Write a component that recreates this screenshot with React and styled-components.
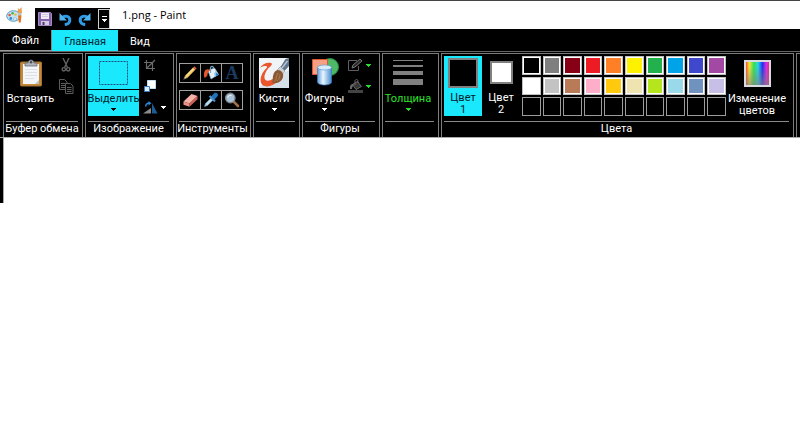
import React from 'react'
import { useState } from 'react';
import styled, { createGlobalStyle } from 'styled-components';

const topColors = ['#000000', '#7f7f7f', '#880015', '#ed1c24', '#ff7f27', '#fff200', '#22b14c', '#00a2e8', '#3f48cc', '#a349a4'];
const bottomColors = ['#ffffff', '#c3c3c3', '#b97a57', '#ffaec9', '#ffc90e', '#efe4b0', '#b5e61d', '#99d9ea', '#7092be', '#c8bfe7'];
const tabs = ['Файл', 'Главная', 'Вид'];

const App = () => {
  const [tab, setTab] = useState('Главная');
  const [slot, setSlot] = useState(1);

  return (
    <>
      <GlobalStyle />
      <TitleBar>
        <PaintLogo />
        <QuickBar>
          <QuickButton aria-label='Сохранить'><SaveIcon /></QuickButton>
          <QuickButton aria-label='Отменить'><UndoIcon /></QuickButton>
          <QuickButton aria-label='Вернуть'><UndoIcon flipped /></QuickButton>
          <QuickMenu aria-label='Настройка панели'>
            <svg width='7' height='10' viewBox='0 0 7 10' shapeRendering='crispEdges'>
              <path d='M1 2h5v1H1zM1 5h5v1H5v1H4v1H3V7H2V6H1z' fill='#fff' />
            </svg>
          </QuickMenu>
        </QuickBar>
        <WindowTitle>1.png - Paint</WindowTitle>
      </TitleBar>

      <TabBar>
        {tabs.map((name, i) => {
          return <Tab key={name} $active={name === tab} $file={i === 0} onClick={() => setTab(name)}>{name}</Tab>
        })}
      </TabBar>

      <Ribbon>
        <Group $width={80}>
          <GroupBody>
            <BigButton $width={49}>
              <BigIcon><ClipboardIcon /></BigIcon>
              <span>Вставить</span>
              <Arrow />
            </BigButton>
            <SmallColumn>
              <SmallButton aria-label='Вырезать'><ScissorsIcon /></SmallButton>
              <SmallButton aria-label='Копировать'><CopyIcon /></SmallButton>
            </SmallColumn>
          </GroupBody>
          <GroupLabel>Буфер обмена</GroupLabel>
        </Group>

        <Group $width={89}>
          <GroupBody>
            <SelectButton>
              <SelectArea>
                <svg width='29' height='24' viewBox='0 0 29 24'>
                  <rect x='.5' y='.5' width='28' height='23' fill='none' stroke='#174b80' strokeDasharray='2 1' />
                </svg>
              </SelectArea>
              <span>Выделить</span>
              <Arrow color='#000' />
            </SelectButton>
            <SmallColumn>
              <SmallButton aria-label='Обрезать'><CropIcon /></SmallButton>
              <SmallButton aria-label='Изменить размер'><ResizeIcon /></SmallButton>
              <SmallButton aria-label='Повернуть'><RotateIcon /><Arrow /></SmallButton>
            </SmallColumn>
          </GroupBody>
          <GroupLabel>Изображение</GroupLabel>
        </Group>

        <Group $width={75}>
          <GroupBody>
            <ToolGrid>
              <Tool aria-label='Карандаш'><PencilIcon /></Tool>
              <Tool aria-label='Заливка'><BucketIcon /></Tool>
              <Tool aria-label='Текст'><Letter>A</Letter></Tool>
              <Tool aria-label='Ластик'><EraserIcon /></Tool>
              <Tool aria-label='Палитра'><DropperIcon /></Tool>
              <Tool aria-label='Масштаб'><LensIcon /></Tool>
            </ToolGrid>
          </GroupBody>
          <GroupLabel>Инструменты</GroupLabel>
        </Group>

        <Group $width={47}>
          <GroupBody>
            <BigButton $width={36}>
              <BigIcon><BrushIcon /></BigIcon>
              <span>Кисти</span>
              <Arrow />
            </BigButton>
          </GroupBody>
          <GroupLabel />
        </Group>

        <Group $width={78}>
          <GroupBody>
            <BigButton $width={39}>
              <BigIcon><ShapesIcon /></BigIcon>
              <span>Фигуры</span>
              <Arrow />
            </BigButton>
            <SmallColumn>
              <SmallButton aria-label='Контур'><OutlineIcon /><Arrow color='#2be02b' /></SmallButton>
              <SmallButton aria-label='Заливка фигуры'><FillIcon /><Arrow color='#2be02b' /></SmallButton>
            </SmallColumn>
          </GroupBody>
          <GroupLabel>Фигуры</GroupLabel>
        </Group>

        <Group $width={57}>
          <GroupBody>
            <BigButton $width={46} $color='#2be02b'>
              <BigIcon><WidthIcon /></BigIcon>
              <span>Толщина</span>
              <Arrow color='#2be02b' />
            </BigButton>
          </GroupBody>
          <GroupLabel />
        </Group>

        <Group $width={353}>
          <GroupBody>
            <ColorSlot $active={slot === 1} onClick={() => setSlot(1)}>
              <SlotBox><SlotColor $size={30} $color='#000' /></SlotBox>
              <span>Цвет<br />1</span>
            </ColorSlot>
            <ColorSlot $active={slot === 2} onClick={() => setSlot(2)}>
              <SlotBox><SlotColor $size={23} $color='#fff' /></SlotBox>
              <span>Цвет<br />2</span>
            </ColorSlot>
            <Palette>
              {[...topColors, ...bottomColors].map((c) => {
                return <Swatch key={c} $color={c} aria-label={c} />
              })}
              {topColors.map((c, i) => {
                return <EmptySwatch key={`empty${i}`} aria-label={`Пусто ${i + 1}`} />
              })}
            </Palette>
            <BigButton $width={62}>
              <BigIcon><SpectrumIcon /></BigIcon>
              <span>Изменение<br />цветов</span>
            </BigButton>
          </GroupBody>
          <GroupLabel>Цвета</GroupLabel>
        </Group>

        <LastGroup />
      </Ribbon>

      <Workspace>
        <Ruler />
      </Workspace>
    </>
  )
}

export default App

const Arrow = ({ color = '#fff' }) => (
  <svg width='5' height='3' viewBox='0 0 5 3' shapeRendering='crispEdges'>
    <path d='M0 0h5v1H4v1H3v1H2V2H1V1H0z' fill={color} />
  </svg>
)

const PaintLogo = () => (
  <svg width='17' height='17' viewBox='0 0 17 17'>
    <ellipse cx='7.5' cy='9' rx='6.8' ry='5.3' fill='#c5e2f1' stroke='#5f9fc4' />
    <ellipse cx='9' cy='12' rx='1.8' ry='1.2' fill='#fff' stroke='#5f9fc4' strokeWidth='.6' />
    <circle cx='3.6' cy='8' r='1.3' fill='#e0563b' />
    <circle cx='6.6' cy='6.2' r='1.3' fill='#4cae4c' />
    <circle cx='4.8' cy='11.4' r='1.3' fill='#2f7fd0' />
    <circle cx='9.4' cy='7.6' r='1.2' fill='#e8b92c' />
    <path d='M11.500 6l.5-5 1.5 1.500L15.500 0l.5 6z' fill='#e9a14e' />
    <path d='M12 6h3.500v2.500H12z' fill='#b9c3ca' />
    <path d='M12 8.500h3.500l-.8 7h-1.900z' fill='#e5701d' />
  </svg>
)

const SaveIcon = () => (
  <svg width='14' height='14' viewBox='0 0 14 14'>
    <path d='M.5.5h12l1 1v12H.5z' fill='#8264ad' stroke='#a58ac4' />
    <path d='M3 1h8v6H3z' fill='#eee9f5' />
    <path d='M4 2.500h6M4 4.500h6' stroke='#d3cae0' />
    <path d='M3 9h8v4H3z' fill='#d5cbe2' />
    <path d='M4.500 10h2v3h-2z' fill='#4c3670' />
  </svg>
)

const UndoIcon = ({ flipped }) => (
  <svg width='14' height='14' viewBox='0 0 14 14'>
    <g transform={flipped ? 'matrix(-1 0 0 1 14 0)' : undefined}>
      <path d='M4 5.500C7 3 11.800 4.200 11.800 8c0 2.800-2 4.300-5 4.600' fill='none' stroke='#2f9be6' strokeWidth='3' />
      <path d='M1.500 1v7.500H9L6.500 6 4 3.500z' fill='#4db4f2' />
    </g>
  </svg>
)

const ClipboardIcon = () => (
  <svg width='24' height='28' viewBox='0 0 24 28'>
    <rect x='1.500' y='3' width='21' height='24' rx='1' fill='#c38a3c' stroke='#a5712d' />
    <path d='M4 5h16v20H4z' fill='#f3f5f8' />
    <path d='M16 25l4-4v4z' fill='#b8c0c8' />
    <path d='M6 10.500h12M6 13.500h12M6 16.500h12M6 19.500h9' stroke='#dce1e7' />
    <path d='M6 7V4h3c0-4 6-4 6 0h3v3z' fill='#aeb4bb' stroke='#646a71' strokeWidth='.8' />
    <circle cx='12' cy='3.200' r='1.200' fill='#474c52' />
  </svg>
)

const ScissorsIcon = () => (
  <svg width='14' height='14' viewBox='0 0 14 14' fill='none' stroke='#626262' strokeWidth='1.400'>
    <path d='M4 0l4.500 9.500M10 0L5.500 9.500' />
    <circle cx='4.800' cy='11.300' r='1.700' />
    <circle cx='9.200' cy='11.300' r='1.700' />
  </svg>
)

const CopyIcon = () => (
  <svg width='15' height='15' viewBox='0 0 15 15' fill='#050505' stroke='#5c5c5c'>
    <path d='M.5.5h5l2.500 2.500v7.500H.5zM2 4.500h4M2 6.500h4M2 8.500h4' />
    <path d='M6.500 4.500h5l2.500 2.500v7.500H6.500zM8 8.500h4.500M8 10.500h4.500M8 12.500h4.500' />
  </svg>
)

const CropIcon = () => (
  <svg width='13' height='13' viewBox='0 0 13 13' fill='none' stroke='#6c6c6c'>
    <path d='M3.500 1v8.500H12M1 3.500h8.500V12M3.500 9.500L12 1' strokeWidth='1.200' />
  </svg>
)

const ResizeIcon = () => (
  <svg width='14' height='13' viewBox='0 0 14 13'>
    <path d='M4.500.5h8v8h-8z' fill='#fff' stroke='#c6dcf0' />
    <path d='M1.500 6.500h5v5h-5z' fill='#dcecfa' stroke='#3c7dbd' />
  </svg>
)

const RotateIcon = () => (
  <svg width='15' height='13' viewBox='0 0 15 13'>
    <path d='M0 12.500L8 7v5.500z' fill='#8a8a8a' />
    <path d='M9 12.500V2l5.500 10.500z' fill='#1d5d94' />
    <path d='M2.500 5.500C3 3 4.500 2 6.500 2' fill='none' stroke='#2f87d5' strokeWidth='1.400' />
    <path d='M5.500 0l3 2.300-3 2.200z' fill='#2f87d5' />
  </svg>
)

const PencilIcon = () => (
  <svg width='16' height='16' viewBox='0 0 16 16'>
    <path d='M1.500 14.500l1.500-3.800 2.300 2.300z' fill='#e9c9a1' />
    <path d='M1.500 14.500l.5-1.800 1.300 1.300z' fill='#554' />
    <path d='M3 10.700l8-8.200 2.300 2.300-8 8.200z' fill='#efc65a' />
    <path d='M4 11.400l8-8' stroke='#fff1ae' />
    <path d='M11 2.500l1.400-1.300 2.300 2.300-1.400 1.300z' fill='#d45c4c' />
  </svg>
)

const BucketIcon = () => (
  <svg width='17' height='16' viewBox='0 0 17 16'>
    <path d='M5 5.500L11.500 3l4 6.500-7.500 4.500z' fill='#e6f1f8' stroke='#8bb5d5' strokeWidth='.7' />
    <path d='M13 5.500l2.500 4-3.500 2.200-1-3z' fill='#8fc0e6' />
    <path d='M7.500 8V3.500c0-3 3-3 3 0' fill='none' stroke='#7aa9cc' strokeWidth='1.200' />
    <path d='M1.500 13C.5 8.500 1 5 4 4.200L8 5C5 6 4.500 8.500 4.300 11z' fill='#e4582c' />
    <path d='M13 8l3.200 1.500-3 1.800z' fill='#2576bc' />
  </svg>
)

const EraserIcon = () => (
  <svg width='17' height='16' viewBox='0 0 17 16'>
    <path d='M1.500 9.500L9.500 2l6 2-8 7.500z' fill='#f6b0a8' />
    <path d='M1.500 9.500l6 2v3.300l-6-2z' fill='#ee9087' />
    <path d='M7.500 11.500l8-7.500v3.200l-8 7.600z' fill='#d0625a' />
  </svg>
)

const DropperIcon = () => (
  <svg width='16' height='16' viewBox='0 0 16 16'>
    <path d='M1.500 14.500l1-3L8 6l2 2-5.500 5.500z' fill='#b9d9ed' stroke='#6c92ab' strokeWidth='.7' />
    <path d='M8 4.500L11.500 1c2-1.200 4.500 1 3 3.300L11 8z' fill='#2272b9' />
    <path d='M6.500 4l5.500 5.500' stroke='#4792cf' strokeWidth='2' />
  </svg>
)

const LensIcon = () => (
  <svg width='16' height='16' viewBox='0 0 16 16'>
    <path d='M9.500 9.500L14 14' stroke='#a56c42' strokeWidth='2.500' strokeLinecap='round' />
    <circle cx='6.300' cy='6' r='4.700' fill='#a9c2d7' stroke='#7c8791' strokeWidth='1.400' />
    <path d='M3.600 5.500c.6-1.700 2-2.500 4-2.200' fill='none' stroke='#e6f1f8' strokeWidth='1.200' />
  </svg>
)

const BrushIcon = () => (
  <svg width='30' height='30' viewBox='0 0 30 30'>
    <path d='M0 0h30v30H0z' fill='#f1f4f6' />
    <path d='M0 29L30 12v18H0z' fill='#d5e0e8' />
    <path d='M1 10C3 6 8 4 12 5c3 1-2 4-4 7-2.500 3.500-4 9-.5 10.500 3.500 1 8-2.500 11-5v6c-4 4.500-11 6.500-15 3.500C-.5 23 2 15 8 9.500 9 7.500 4 7.500 1 10z' fill='#ea562d' />
    <path d='M26.500 1L30 0v8l-4.500 5-4-4z' fill='#63758c' />
    <path d='M28.500 3L23 10' stroke='#bac8d8' strokeWidth='1.300' />
    <path d='M21.500 8.500l4.500 4.500-2.500 3-5-4.500z' fill='#c9d1d7' stroke='#7e878d' strokeWidth='.5' />
    <path d='M18.500 12c4 0 6.500 3.500 5.500 7-1.500 5.500-6.500 7-11 5.500 1.500-1.500.3-3.500 1-6.500.7-3.500 2-5.500 4.500-6z' fill='#8b5835' />
    <path d='M15.500 23.500c2-2 1.500-5 3.500-8.500M18 23c2-1.500 2.500-3.500 3-6.500' fill='none' stroke='#b98254' strokeWidth='.9' />
  </svg>
)

const ShapesIcon = () => (
  <svg width='30' height='30' viewBox='0 0 30 30'>
    <defs>
      <linearGradient id='cyl'>
        <stop offset='0' stopColor='#5f9fdc' />
        <stop offset='.4' stopColor='#eaf5ff' />
        <stop offset='1' stopColor='#478cce' />
      </linearGradient>
    </defs>
    <circle cx='20' cy='9' r='8.500' fill='#4db866' stroke='#268a42' />
    <path d='M2.500 1.500h15v15h-15z' fill='#f6a183' stroke='#df5530' />
    <path d='M7.500 9v15c0 4 14 4 14 0V9z' fill='url(#cyl)' stroke='#3c7dbc' strokeWidth='.7' />
    <ellipse cx='14.500' cy='9.500' rx='7' ry='2.500' fill='#d8ecfb' stroke='#5e9ed6' strokeWidth='.7' />
  </svg>
)

const OutlineIcon = () => (
  <svg width='15' height='14' viewBox='0 0 15 14' fill='none' stroke='#606060'>
    <path d='M9 2.500H.5v10h10V8' />
    <path d='M4 10l1-3 7-6 2 2-7 6z' fill='#2c2c2c' stroke='#757575' />
  </svg>
)

const FillIcon = () => (
  <svg width='15' height='14' viewBox='0 0 15 14'>
    <path d='M4.500 5.500l5-3 4 5-5.500 3z' fill='#363636' stroke='#666' />
    <path d='M7 6V2c0-2 3-2 3 0v2' fill='none' stroke='#666' />
    <path d='M2 10c-.5-3 .5-5 3-5l1.500 1C4.500 7 4 8 4 10z' fill='#666' />
    <path d='M0 11h15v3H0z' fill='#444' />
  </svg>
)

const WidthIcon = () => (
  <svg width='30' height='26' viewBox='0 0 30 26' fill='#808080' shapeRendering='crispEdges'>
    <path d='M0 0h30v1H0zM0 5h30v2H0zM0 11h30v4H0zM0 19h30v6H0z' />
  </svg>
)

const SpectrumIcon = () => (
  <svg width='27' height='27' viewBox='0 0 27 27'>
    <defs>
      <linearGradient id='hue'>
        <stop offset='0' stopColor='#ff2020' />
        <stop offset='.17' stopColor='#f6e83c' />
        <stop offset='.35' stopColor='#37e04c' />
        <stop offset='.52' stopColor='#27d5e8' />
        <stop offset='.7' stopColor='#2430f0' />
        <stop offset='.86' stopColor='#e02ae0' />
        <stop offset='1' stopColor='#f02050' />
      </linearGradient>
      <linearGradient id='fade' x2='0' y2='1'>
        <stop offset='.2' stopColor='#808080' stopOpacity='0' />
        <stop offset='1' stopColor='#808080' stopOpacity='.7' />
      </linearGradient>
    </defs>
    <path d='M1 1h25v25H1z' fill='url(#hue)' />
    <path d='M1 1h25v25H1z' fill='url(#fade)' stroke='#d9dbe0' strokeWidth='2' />
  </svg>
)

const GlobalStyle = createGlobalStyle`
* {
  box-sizing: border-box;
}
body {
  margin: 0;
  background: #fff;
  font-family: Roboto, "Open Sans", sans-serif;
  font-size: 11px;
  line-height: 12px;
}
button {
  margin: 0;
  padding: 0;
  border: 0;
  background: none;
  color: inherit;
  font: inherit;
}
svg {
  display: block;
  flex: none;
}
`;

const TitleBar = styled.header`
display: flex;
align-items: flex-start;
height: 29px;
padding: 6px 6px 0;
border-top: 1px solid #444;
`;

const QuickBar = styled.div`
display: flex;
align-items: center;
gap: 6px;
height: 21px;
margin: 1px 12px 0;
padding-left: 3px;
background: #000;
`;

const QuickButton = styled.button`
display: flex;
`;

const QuickMenu = styled.button`
display: flex;
align-items: center;
justify-content: center;
width: 12px;
height: 20px;
border: 1px solid #d0d0d0;
`;

const WindowTitle = styled.span`
font-family: "Open Sans", "Noto Sans", sans-serif;
line-height: 16px;
`;

const TabBar = styled.nav`
display: flex;
height: 23px;
padding-top: 1px;
background: #000;
border-bottom: 1px solid #666;
`;

const Tab = styled.button`
padding: 2px 12px 0;
background: ${(p) => (p.$active ? '#1ae8fc' : '#000')};
color: ${(p) => (p.$active ? '#02202c' : '#fff')};
border-right: ${(p) => (p.$file ? '1px solid #888' : '0')};
border-bottom: ${(p) => (p.$file ? '1px solid #999' : '0')};
`;

const Ribbon = styled.section`
display: flex;
gap: 2px;
padding: 1px 0 0 3px;
background: #000;
color: #fff;
border-bottom: 1px solid #aaa;
overflow: hidden;
`;

const Group = styled.div`
display: flex;
flex-direction: column;
flex: none;
width: ${(p) => p.$width}px;
height: 84px;
padding: 2px 2px 0;
border: 1px solid #7c7c7c;
border-bottom: 0;
`;

const LastGroup = styled.div`
flex: 1 0 4px;
border: 1px solid #7c7c7c;
border-width: 1px 0 0 1px;
`;

const GroupBody = styled.div`
display: flex;
justify-content: flex-start;
height: 65px;
`;

const GroupLabel = styled.div`
display: flex;
justify-content: center;
height: 16px;
margin-right: 2px;
padding-top: 1px;
border-top: 1px solid #8a8a8a;
white-space: nowrap;
`;

const BigButton = styled.button`
display: flex;
flex-direction: column;
align-items: center;
flex: none;
width: ${(p) => p.$width}px;
color: ${(p) => p.$color || '#fff'};

span {
  margin-bottom: 3px;
}
`;

const BigIcon = styled.div`
display: flex;
align-items: center;
height: 37px;
padding-bottom: 3px;
`;

const SelectButton = styled(BigButton)`
width: 51px;
height: 60px;
background: #1ae8fc;
color: #02202c;
`;

const SelectArea = styled.div`
display: flex;
align-items: center;
justify-content: center;
align-self: stretch;
height: 34px;
margin-bottom: 3px;
border-bottom: 1px solid #000;
`;

const SmallColumn = styled.div`
display: flex;
flex-direction: column;
align-items: flex-start;
gap: 7px;
padding: 2px 0 0 4px;
`;

const SmallButton = styled.button`
display: flex;
align-items: center;
gap: 3px;
height: 14px;
`;

const ToolGrid = styled.div`
display: grid;
grid-template-columns: repeat(3, 21px);
grid-auto-rows: 20px;
row-gap: 7px;
padding: 7px 0 0;
`;

const Tool = styled.button`
display: flex;
align-items: center;
justify-content: center;
margin-right: -1px;
border: 1px solid #a0a0a0;
`;

const Letter = styled.span`
color: #1c3a60;
font: bold 18px/18px "Liberation Serif", serif;
`;

const ColorSlot = styled.button`
display: flex;
flex-direction: column;
align-items: center;
width: 38px;
height: 60px;
background: ${(p) => (p.$active ? '#1ae8fc' : '#000')};
color: ${(p) => (p.$active ? '#02202c' : '#fff')};
`;

const SlotBox = styled.div`
display: flex;
align-items: center;
justify-content: center;
height: 34px;
margin-bottom: 3px;
`;

const SlotColor = styled.div`
width: ${(p) => p.$size}px;
height: ${(p) => p.$size}px;
background: ${(p) => p.$color};
border: 2px solid #808080;
`;

const Palette = styled.div`
display: grid;
grid-template-columns: repeat(10, 1fr);
grid-template-rows: repeat(3, 1fr);
gap: 2px;
flex: none;
width: 204px;
height: 60px;
margin-left: 2px;
`;

const Swatch = styled.button`
border: 1px solid #c0c0c0;
box-shadow: inset 0 0 0 1px #fff;
background: ${(p) => p.$color};
`;

const EmptySwatch = styled.button`
border: 1px solid #9c9c9c;
`;

const Workspace = styled.main`
background: #fff;
`;

const Ruler = styled.div`
width: 4px;
height: 65px;
background: #000;
border-right: 1px solid #aaa;
`;
